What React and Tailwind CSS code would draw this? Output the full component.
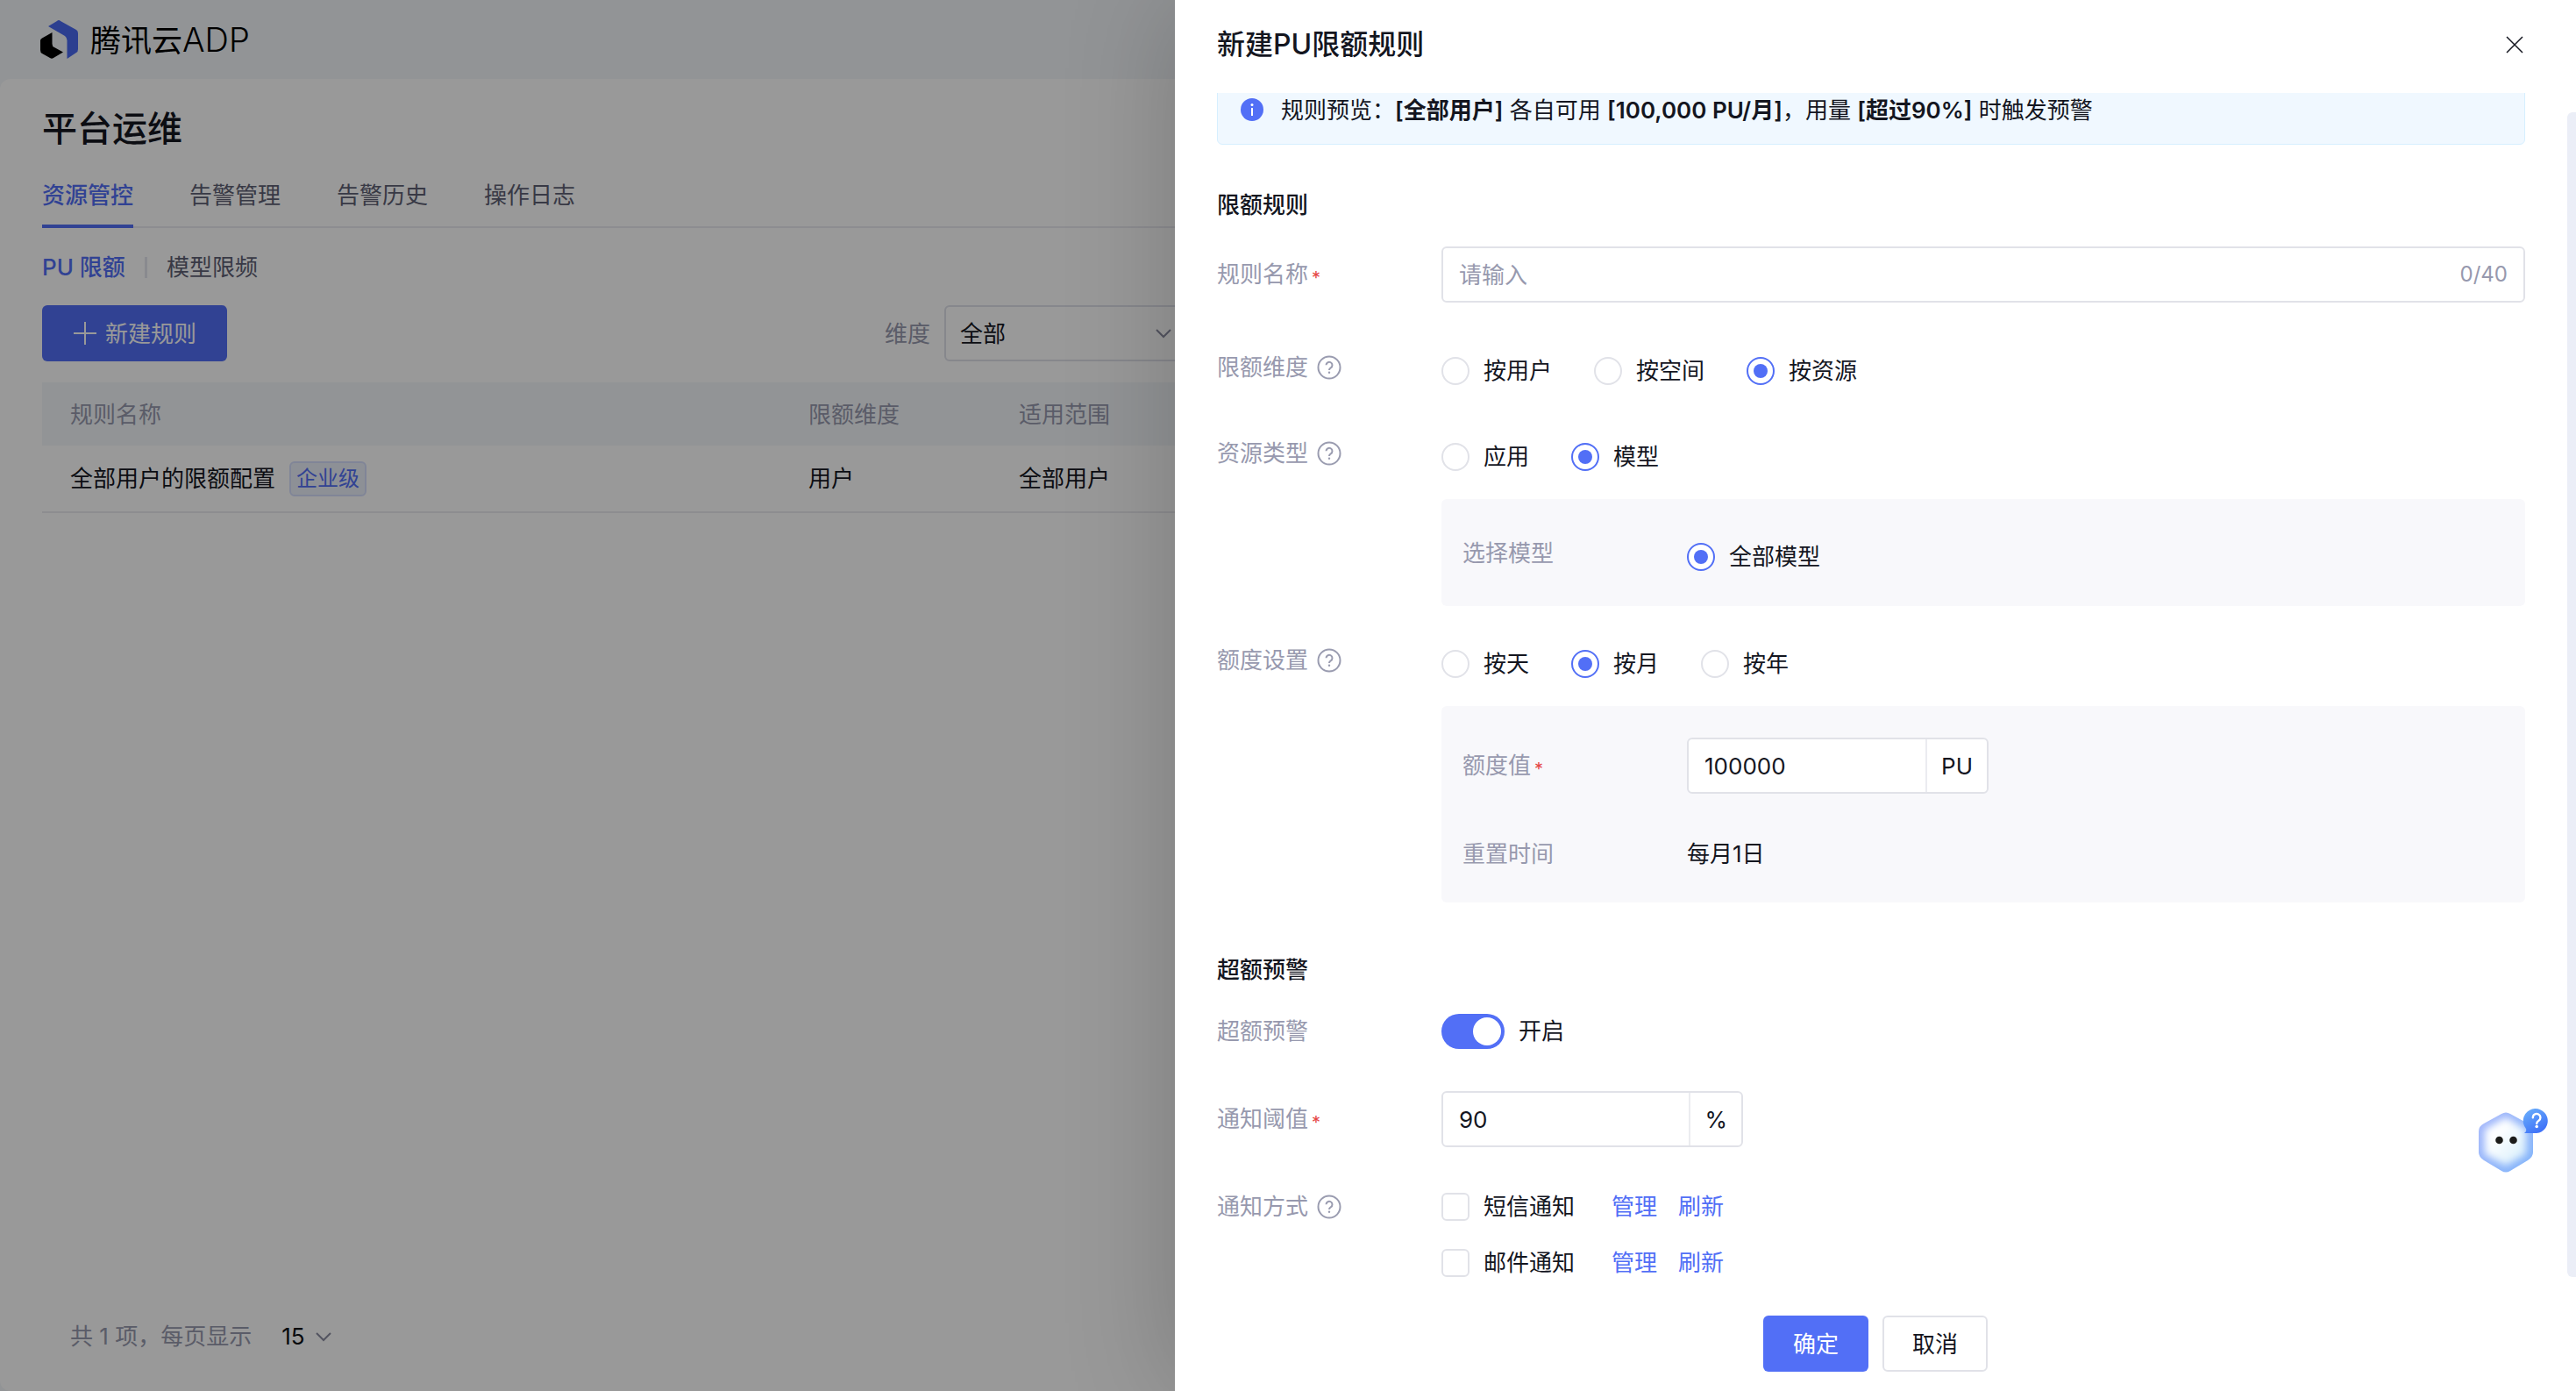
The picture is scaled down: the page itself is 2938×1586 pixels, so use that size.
import { useState } from 'react';

const TABS = ['资源管控', '告警管理', '告警历史', '操作日志'];

function Logo() {
  return (
    <svg viewBox="0 0 43 44" className="w-[43px] h-11" aria-hidden="true">
      <path d="M9 7 19 1Q21 -1 23 1L41 11Q43 12 43 15V33Q43 36 41 37L30.500 44V23Q30.500 20 28 18Z" fill="#4a69f0" />
      <path d="M13.500 14V27Q13.500 30 16 31L26 36.500 15 43Q13 44.500 11 43L2 38Q0 37 0 34V23Q0 21.500 2 20.500Z" fill="#000" />
    </svg>
  );
}

function Chevron({ className }) {
  return (
    <svg viewBox="0 0 18 12" fill="none" stroke="#8a8ca0" strokeWidth="2" className={className} aria-hidden="true">
      <path d="M1 2 9 10 17 2" />
    </svg>
  );
}

function HelpIcon() {
  return (
    <svg viewBox="0 0 28 28" fill="none" className="size-7 ml-2.5 shrink-0" aria-hidden="true">
      <circle cx="14" cy="14" r="12.5" stroke="#9a9cb0" strokeWidth="2" />
      <path d="M10.5 11.3a3.5 3.5 0 1 1 5.3 3c-1.2.7-1.8 1.3-1.8 2.6" stroke="#9a9cb0" strokeWidth="2" />
      <circle cx="14" cy="19.8" r="1.2" fill="#9a9cb0" />
    </svg>
  );
}

function Assistant() {
  return (
    <svg viewBox="0 0 82 76" className="w-[82px] h-[76px]" aria-hidden="true">
      <defs>
        <linearGradient id="edge" x1="0" y1="0" x2="1" y2="1">
          <stop offset="0" stopColor="#a9b8fb" />
          <stop offset="1" stopColor="#7fb4fa" />
        </linearGradient>
        <linearGradient id="core" x1="0" y1="0" x2="1" y2="1">
          <stop offset="0.3" stopColor="#ffffff" />
          <stop offset="1" stopColor="#d3edfb" />
        </linearGradient>
        <linearGradient id="bubble" x1="0" y1="0" x2="0.6" y2="1">
          <stop offset="0" stopColor="#6cb2fb" />
          <stop offset="1" stopColor="#3f72f8" />
        </linearGradient>
        <filter id="soft" x="-20%" y="-20%" width="140%" height="140%">
          <feGaussianBlur stdDeviation="4" />
        </filter>
        <clipPath id="hex">
          <path d="M27 6Q32 3 37 6L57 17Q63 20 63 26V50Q63 55 57 59L37 71Q32 74 27 71L7 59Q1 55 1 50V26Q1 20 7 17Z" />
        </clipPath>
      </defs>
      <g clipPath="url(#hex)">
        <rect width="64" height="76" fill="url(#edge)" />
        <path d="M32 10 55 24V52L32 65 8 52V24Z" fill="url(#core)" filter="url(#soft)" />
      </g>
      <circle cx="24.5" cy="36" r="4.3" fill="#1c1c1a" />
      <circle cx="40.5" cy="36" r="4.3" fill="#1c1c1a" />
      <path d="M53 28Q56 26 55 23A14 14 0 1 1 67 28Z" fill="url(#bubble)" />
      <path d="M62.8 10.2a4.3 4.3 0 1 1 6.7 3.6c-1.4.9-2.3 1.5-2.3 3.2" fill="none" stroke="#fff" strokeWidth="2.4" strokeLinecap="round" />
      <circle cx="67.2" cy="20.5" r="1.8" fill="#fff" />
    </svg>
  );
}

function FormRow({ label, htmlFor, required, help, className = 'items-start', children }) {
  return (
    <div className={`flex ${className}`}>
      <label htmlFor={htmlFor} className="flex items-center shrink-0 w-[256px] leading-10 text-[#9799ae]">
        {label}
        {required && <span className="ml-1 pt-2 text-[20px] leading-8 text-[#e54545]">*</span>}
        {help && <HelpIcon />}
      </label>
      <div className="flex-1 min-w-0">{children}</div>
    </div>
  );
}

function RadioGroup({ name, options, value, onChange }) {
  return (
    <div className="flex gap-12 pt-1">
      {options.map(option => (
        <label key={option} className="flex items-center gap-4 leading-10">
          <input type="radio" name={name} checked={value === option} onChange={() => onChange(option)}
            className="appearance-none grid place-content-center size-8 rounded-full border-2 border-[#e1e2e8] bg-white checked:border-[#526ff6] checked:before:content-[''] checked:before:size-4 checked:before:rounded-full checked:before:bg-[#526ff6]" />
          {option}
        </label>
      ))}
    </div>
  );
}

function UnitInput({ id, value, onChange, unit }) {
  return (
    <div className="flex w-[344px] h-16 rounded-md border-2 border-[#e1e2e8] bg-white overflow-hidden">
      <input id={id} value={value} onChange={e => onChange(e.target.value)} className="flex-1 min-w-0 px-[18px] outline-none" />
      <span className="flex items-center px-4 border-l-2 border-[#ebecf0]">{unit}</span>
    </div>
  );
}

function NotifyOption({ label }) {
  return (
    <div className="flex items-center leading-10">
      <label className="flex items-center gap-4">
        <input type="checkbox" className="appearance-none size-8 rounded-md border-2 border-[#e1e2e8] bg-white checked:bg-[#526ff6]" />
        {label}
      </label>
      <a href="#manage" className="ml-[42px] text-[#526ff6]">管理</a>
      <a href="#refresh" className="ml-6 text-[#526ff6]">刷新</a>
    </div>
  );
}

function RulesPage() {
  return (
    <div className="flex flex-col h-full bg-[#f4f7fa]">
      <header className="flex items-center h-[90px] px-[46px] gap-[14px]">
        <Logo />
        <span className="flex items-baseline text-[35px] text-black">
          腾讯云<span className="text-[38px] font-light">ADP</span>
        </span>
      </header>

      <main className="flex flex-col flex-1 px-12 pt-7 rounded-xl bg-white">
        <h1 className="text-[40px] leading-[58px] font-medium">平台运维</h1>

        <nav className="flex gap-16 mt-[22px] h-[62px] border-b-2 border-[#ebecf0]">
          {TABS.map((tab, i) => (
            <a key={tab} href="#tab" className={`leading-[50px] h-[62px] ${i === 0 ? 'text-[#526ff6] font-medium border-b-4 border-[#526ff6]' : 'text-[#5e6074]'}`}>
              {tab}
            </a>
          ))}
        </nav>

        <nav className="flex items-center gap-[22px] mt-[25px] leading-10">
          <a href="#pu" className="text-[#526ff6] font-medium">PU 限额</a>
          <span className="w-[3px] h-6 bg-[#e4e6ee]" />
          <a href="#model" className="text-[#5e6074]">模型限频</a>
        </nav>

        <div className="flex items-center mt-[23px]">
          <button type="button" className="flex items-center gap-[9px] h-16 px-[35px] rounded-md bg-[#526ff6] text-white">
            <svg viewBox="0 0 28 28" stroke="currentColor" strokeWidth="2" className="size-7" aria-hidden="true">
              <path d="M14 1V27M1 14H27" />
            </svg>
            新建规则
          </button>
          <label htmlFor="dimension" className="ml-[750px] text-[#9799ae]">维度</label>
          <div className="relative ml-4">
            <select id="dimension" className="appearance-none w-[276px] h-16 px-4 rounded-md border-2 border-[#dfe1ea] bg-white">
              <option>全部</option>
            </select>
            <Chevron className="absolute right-[17px] top-[26px] w-[18px] h-3" />
          </div>
        </div>

        <table className="w-full mt-6 table-fixed text-left">
          <thead className="bg-[#f4f7fa] text-[#9799ae]">
            <tr className="h-[72px]">
              <th className="w-[842px] pl-8 font-normal">规则名称</th>
              <th className="w-[240px] pl-8 font-normal">限额维度</th>
              <th className="pl-8 font-normal">适用范围</th>
            </tr>
          </thead>
          <tbody>
            <tr className="h-[76px] border-b-2 border-[#ebecf0]">
              <td className="pl-8">
                <div className="flex items-center gap-4">
                  全部用户的限额配置
                  <span className="h-10 px-[6px] rounded-md border-2 border-[#d5defc] bg-[#ecf1fb] text-[24px] leading-9 text-[#526ff6]">企业级</span>
                </div>
              </td>
              <td className="pl-8">用户</td>
              <td className="pl-8">全部用户</td>
            </tr>
          </tbody>
        </table>

        <footer className="flex items-center mt-auto mb-[42px] px-8 leading-10 text-[#9799ae]">
          <label htmlFor="page-size">共 1 项，每页显示</label>
          <div className="relative ml-[34px]">
            <select id="page-size" className="appearance-none w-[57px] text-[#0d0f17]">
              <option>15</option>
            </select>
            <Chevron className="absolute right-0 top-[14px] w-[18px] h-3" />
          </div>
        </footer>
      </main>
    </div>
  );
}

function RuleDrawer() {
  const [name, setName] = useState('');
  const [dimension, setDimension] = useState('按资源');
  const [resource, setResource] = useState('模型');
  const [model, setModel] = useState('全部模型');
  const [period, setPeriod] = useState('按月');
  const [quota, setQuota] = useState('100000');
  const [alertOn, setAlertOn] = useState(true);
  const [threshold, setThreshold] = useState('90');

  return (
    <section role="dialog" aria-labelledby="drawer-title"
      className="absolute inset-y-0 right-0 flex flex-col w-[1598px] max-w-full bg-white shadow-[0_0_120px_rgba(0,0,0,0.2)]">
      <header className="flex items-center justify-between h-[106px] pl-12 pr-[58px] pb-1 shrink-0">
        <h2 id="drawer-title" className="text-[32px] leading-10 font-medium">新建PU限额规则</h2>
        <button type="button" aria-label="关闭" className="size-6">
          <svg viewBox="0 0 24 24" stroke="currentColor" strokeWidth="1.5" aria-hidden="true">
            <path d="M3 3 21 21M21 3 3 21" />
          </svg>
        </button>
      </header>

      <form className="flex-1 min-h-0 overflow-hidden pl-12 pr-[58px]">
        <div className="flex items-center gap-5 -mt-[21px] h-20 px-[26px] rounded-md border border-[#d6efff] bg-[#f0f8ff]">
          <svg viewBox="0 0 26 26" className="size-[26px] shrink-0" aria-hidden="true">
            <circle cx="13" cy="13" r="13" fill="#526ff6" />
            <circle cx="13" cy="7.5" r="1.5" fill="#fff" />
            <path d="M13 11V20" stroke="#fff" strokeWidth="2" />
          </svg>
          <p>
            规则预览：<b className="font-semibold">[全部用户]</b> 各自可用 <b className="font-semibold">[100,000 PU/月]</b>，用量 <b className="font-semibold">[超过90%]</b> 时触发预警
          </p>
        </div>

        <h3 className="mt-[49px] leading-10 font-medium">限额规则</h3>
        <FormRow label="规则名称" htmlFor="rule-name" required className="mt-[27px] items-center">
          <div className="flex items-center h-16 px-[18px] rounded-md border-2 border-[#e1e2e8]">
            <input id="rule-name" maxLength={40} placeholder="请输入" value={name} onChange={e => setName(e.target.value)}
              className="flex-1 min-w-0 outline-none placeholder-[#9799ae]" />
            <span className="text-[24px] text-[#9799ae]">{name.length}/40</span>
          </div>
        </FormRow>

        <FormRow label="限额维度" help className="mt-[54px] items-start">
          <RadioGroup name="dimension" options={['按用户', '按空间', '按资源']} value={dimension} onChange={setDimension} />
        </FormRow>

        <FormRow label="资源类型" help className="mt-[54px] items-start">
          <RadioGroup name="resource" options={['应用', '模型']} value={resource} onChange={setResource} />
          <div className="mt-7 px-6 pt-[42px] pb-9 rounded-md bg-[#f8f8fb]">
            <FormRow label="选择模型">
              <RadioGroup name="model" options={['全部模型']} value={model} onChange={setModel} />
            </FormRow>
          </div>
        </FormRow>

        <FormRow label="额度设置" help className="mt-[42px] items-start">
          <RadioGroup name="period" options={['按天', '按月', '按年']} value={period} onChange={setPeriod} />
          <div className="mt-7 px-6 pt-9 pb-[35px] rounded-md bg-[#f8f8fb]">
            <FormRow label="额度值" htmlFor="quota" required className="items-center">
              <UnitInput id="quota" value={quota} onChange={setQuota} unit="PU" />
            </FormRow>
            <FormRow label="重置时间" className="mt-[49px] items-start">
              <p className="leading-10">每月1日</p>
            </FormRow>
          </div>
        </FormRow>

        <h3 className="mt-[57px] leading-10 font-medium">超额预警</h3>
        <FormRow label="超额预警" className="mt-[30px] items-start">
          <label className="flex items-center gap-4 leading-10">
            <input type="checkbox" role="switch" checked={alertOn} onChange={e => setAlertOn(e.target.checked)}
              className="appearance-none flex items-center w-[72px] h-10 px-1 rounded-full bg-[#d5d7e0] checked:bg-[#526ff6] checked:justify-end before:content-[''] before:size-8 before:rounded-full before:bg-white" />
            {alertOn ? '开启' : '关闭'}
          </label>
        </FormRow>
        <FormRow label="通知阈值" htmlFor="threshold" required className="mt-12 items-center">
          <UnitInput id="threshold" value={threshold} onChange={setThreshold} unit="%" />
        </FormRow>
        <FormRow label="通知方式" help className="mt-12 items-start">
          <div className="flex flex-col gap-6">
            <NotifyOption label="短信通知" />
            <NotifyOption label="邮件通知" />
          </div>
        </FormRow>
      </form>

      <footer className="flex justify-center gap-4 pt-11 pb-[22px] shrink-0">
        <button type="button" className="w-[120px] h-16 rounded-md bg-[#526ff6] text-white">确定</button>
        <button type="button" className="w-[120px] h-16 rounded-md border-2 border-[#e1e2e8] bg-white">取消</button>
      </footer>

      <div className="absolute right-0 top-32 bottom-[130px] w-[10px] rounded-l-md bg-[#ebeef7]" />
      <button type="button" aria-label="智能助手" className="absolute right-[30px] bottom-[246px]">
        <Assistant />
      </button>
    </section>
  );
}

export default function App() {
  return (
    <div className="relative h-screen overflow-hidden text-[26px] text-[#14161f] font-['Inter','Noto_Sans_CJK_SC',sans-serif]">
      <RulesPage />
      <div className="absolute inset-0 bg-black/40" />
      <RuleDrawer />
    </div>
  );
}
